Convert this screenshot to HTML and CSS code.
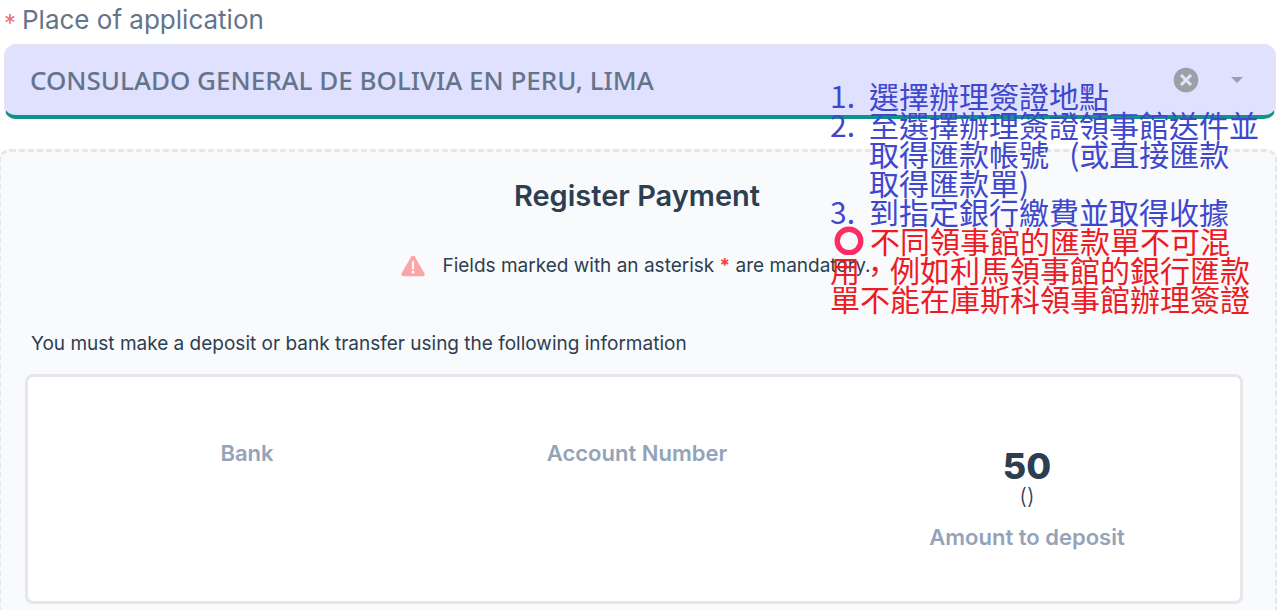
FILE: index.html
```html
<!DOCTYPE html>
<html lang="en">
<head>
<meta charset="utf-8">
<title>Register Payment</title>
<link rel="stylesheet" href="styles.css">
</head>
<body>
<main class="page">
  <div class="field">
    <label class="field-label" for="place"><span class="required">*</span><span>Place of application</span></label>
    <div class="select-box">
      <select class="select" id="place">
        <option>CONSULADO GENERAL DE BOLIVIA EN PERU, LIMA</option>
      </select>
      <button class="clear" type="button" aria-label="Clear selection">
        <svg width="26" height="26" viewBox="0 0 26 26" aria-hidden="true"><circle cx="13" cy="13" r="12.3" fill="#9aa0a6"/><path d="M8 8l10 10M18 8L8 18" stroke="#e4e5fd" stroke-width="3"/></svg>
      </button>
      <svg class="caret" width="12" height="6" viewBox="0 0 12 6" aria-hidden="true"><path d="M0 0h12L6 6z" fill="#9a9fae"/></svg>
    </div>
  </div>

  <section class="card">
    <h1 class="title">Register Payment</h1>
    <p class="notice">
      <svg width="24" height="22" viewBox="0 0 24 22" aria-hidden="true"><path d="M10.3 1.600a2 2 0 0 1 3.400 0l9.700 16.600a2 2 0 0 1-1.700 3H2.300a2 2 0 0 1-1.700-3z" fill="#fca5a5"/><path d="M12 7v6.500" stroke="#fff" stroke-width="2.200" stroke-linecap="round"/><circle cx="12" cy="17" r="1.500" fill="#fff"/></svg>
      <span>Fields marked with an asterisk <b class="star">*</b> are mandatory.</span>
    </p>
    <p class="intro">You must make a deposit or bank transfer using the following information</p>
    <div class="deposit">
      <div class="column"><h2 class="caption">Bank</h2></div>
      <div class="column"><h2 class="caption">Account Number</h2></div>
      <div class="column amount">
        <strong class="value">50</strong>
        <span class="currency">()</span>
        <h2 class="caption">Amount to deposit</h2>
      </div>
    </div>
  </section>

  <aside class="note" lang="zh-Hant">
    <ol class="steps">
      <li><span>1.</span><span>選擇辦理簽證地點</span></li>
      <li><span>2.</span><span>至選擇辦理簽證領事館送件並<br>取得匯款帳號&nbsp;&nbsp;&nbsp;(或直接匯款<br>取得匯款單)</span></li>
      <li><span>3.</span><span>到指定銀行繳費並取得收據</span></li>
    </ol>
    <p class="warning"><svg class="ring" width="40" height="29" viewBox="0 0 40 29" aria-hidden="true"><circle cx="19" cy="15" r="11.800" fill="none" stroke="#fb2e63" stroke-width="5.400"/></svg>不同領事館的匯款單不可混<br>用，例如利馬領事館的銀行匯款<br>單不能在庫斯科領事館辦理簽證</p>
  </aside>
</main>
</body>
</html>
```
FILE: styles.css
```css
* { box-sizing: border-box; }

body {
  margin: 0;
  background: #fff;
  color: #2c3e50;
  font-family: Inter, "Open Sans", sans-serif;
  font-size: 19px;
}

h1, h2, p, ol { margin: 0; padding: 0; }

.page {
  position: relative;
  overflow: hidden;
}

.field { padding: 0 1px 0 4px; }

.field-label {
  display: flex;
  align-items: center;
  gap: 6px;
  height: 44px;
  padding-bottom: 5px;
  color: #64748b;
  font-size: 26px;
}

.required {
  width: 12px;
  padding-top: 8px;
  color: #e57373;
  font-size: 24px;
}

.select-box {
  display: flex;
  align-items: center;
  padding: 0 32px 0 25px;
  border: 1px solid #e2e4ee;
  border-bottom: 4px solid #0d9488;
  border-radius: 12px;
  background: #e0e0ff;
}

.select {
  flex: 1;
  min-width: 0;
  height: 70px;
  padding: 0;
  border: 0;
  appearance: none;
  background: transparent;
  color: #64748b;
  font: 500 26px "Noto Sans", sans-serif;
}

.clear {
  display: flex;
  margin-right: 32px;
  padding: 0;
  border: 0;
  background: transparent;
}

.card {
  margin: 30px -1px -37px -2px;
  padding: 28px 32px 40px 24px;
  border: 3px dashed #e5e7eb;
  border-radius: 12px;
  background: #f9fafc;
}

.title {
  padding-left: 6px;
  font-size: 29px;
  font-weight: 600;
  line-height: 32px;
  text-align: center;
}

.notice {
  display: flex;
  justify-content: center;
  align-items: center;
  gap: 17px;
  padding-left: 4px;
  margin-top: 40px;
  line-height: 28px;
}

.star { color: #ef4444; }

.intro {
  margin-top: 50px;
  padding-left: 6px;
  line-height: 28px;
}

.deposit {
  display: grid;
  grid-template-columns: repeat(3, 1fr);
  margin-top: 16px;
  padding: 62px 18px 50px 24px;
  border: 3px solid #e5e7eb;
  border-radius: 8px;
  background: #fff;
}

.column { text-align: center; }

.caption {
  color: #94a3b8;
  font-size: 22px;
  font-weight: 600;
  line-height: 28px;
}

.amount {
  display: flex;
  flex-direction: column;
  padding-top: 8px;
}

.value {
  font-size: 36px;
  font-weight: 800;
  line-height: 38px;
}

.currency {
  margin-bottom: 16px;
  font-size: 22px;
  font-weight: 300;
  line-height: 22px;
}

.note {
  position: absolute;
  top: 81px;
  right: 17px;
  width: 430px;
  color: #3f48cc;
  font-family: "Noto Sans CJK TC", sans-serif;
  font-size: 30px;
  line-height: 29px;
  white-space: nowrap;
}

.steps { list-style: none; }

.steps li {
  display: grid;
  grid-template-columns: 39px 1fr;
}

.warning { color: #ed1c24; }

.ring { vertical-align: top; }
```
